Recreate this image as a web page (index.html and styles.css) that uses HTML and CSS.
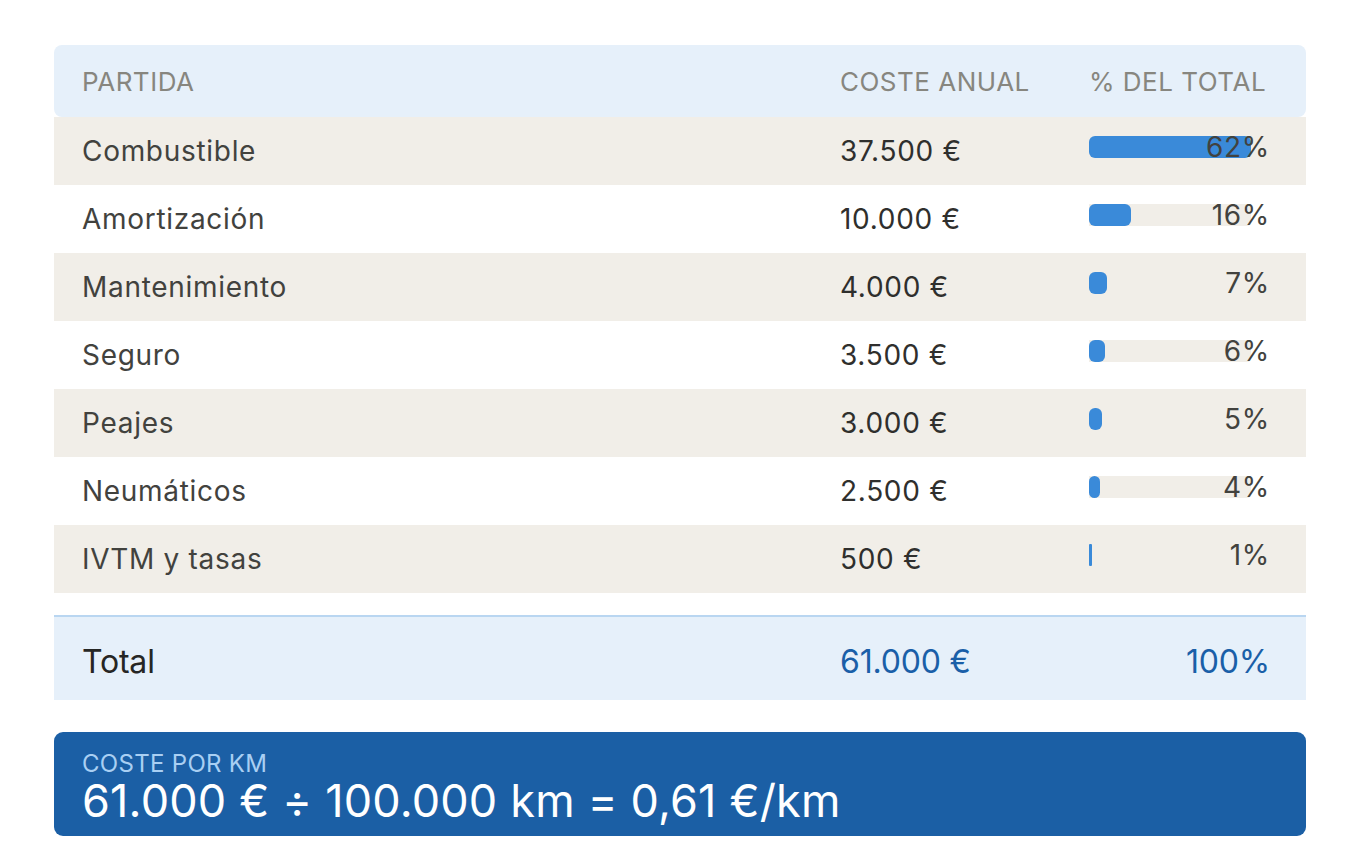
FILE: index.html
```html
<!DOCTYPE html>
<html lang="es">
<head>
<meta charset="utf-8">
<title>Costes anuales</title>
<link rel="stylesheet" href="styles.css">
</head>
<body>
<main class="page">
  <section class="table">
    <div class="row head">
      <div class="cell">PARTIDA</div>
      <div class="cell">COSTE ANUAL</div>
      <div class="cell">% DEL TOTAL</div>
    </div>
    <div class="row odd">
      <div class="cell">Combustible</div>
      <div class="cell num">37.500 €</div>
      <div class="cell"><div class="meter"><div class="track"><div class="fill" style="width:100%"></div></div><span class="pct">62%</span></div></div>
    </div>
    <div class="row">
      <div class="cell">Amortización</div>
      <div class="cell num">10.000 €</div>
      <div class="cell"><div class="meter"><div class="track"><div class="fill" style="width:25.8%"></div></div><span class="pct">16%</span></div></div>
    </div>
    <div class="row odd">
      <div class="cell">Mantenimiento</div>
      <div class="cell num">4.000 €</div>
      <div class="cell"><div class="meter"><div class="track"><div class="fill" style="width:11.3%"></div></div><span class="pct">7%</span></div></div>
    </div>
    <div class="row">
      <div class="cell">Seguro</div>
      <div class="cell num">3.500 €</div>
      <div class="cell"><div class="meter"><div class="track"><div class="fill" style="width:9.7%"></div></div><span class="pct">6%</span></div></div>
    </div>
    <div class="row odd">
      <div class="cell">Peajes</div>
      <div class="cell num">3.000 €</div>
      <div class="cell"><div class="meter"><div class="track"><div class="fill" style="width:8.1%"></div></div><span class="pct">5%</span></div></div>
    </div>
    <div class="row">
      <div class="cell">Neumáticos</div>
      <div class="cell num">2.500 €</div>
      <div class="cell"><div class="meter"><div class="track"><div class="fill" style="width:6.5%"></div></div><span class="pct">4%</span></div></div>
    </div>
    <div class="row odd">
      <div class="cell">IVTM y tasas</div>
      <div class="cell num">500 €</div>
      <div class="cell"><div class="meter"><div class="track"><div class="fill thin" style="width:1.6%"></div></div><span class="pct">1%</span></div></div>
    </div>
    <div class="row total">
      <div class="cell">Total</div>
      <div class="cell num blue">61.000 €</div>
      <div class="cell total-pct blue">100%</div>
    </div>
  </section>
  <section class="perkm">
    <div class="perkm-label">COSTE POR KM</div>
    <div class="perkm-value">61.000 € ÷ 100.000 km = 0,61 €/km</div>
  </section>
</main>
</body>
</html>
```
FILE: styles.css
```css
* { box-sizing: border-box; }
html, body { margin: 0; padding: 0; background: #ffffff; }
body {
  font-family: Inter, "Noto Sans", sans-serif;
  color: #42423e;
}
.page {
  width: 1252px;
  margin: 45px 0 0 54px;
}
.table { display: flex; flex-direction: column; }
.row {
  display: grid;
  grid-template-columns: 758px 249px 1fr;
  align-items: center;
  height: 68px;
  font-size: 28px;
  letter-spacing: 0.7px;
}
.row.odd { background: #f1eee8; }
.cell { padding-left: 28px; }
.cell:last-child { padding-right: 36px; }
.head {
  height: 72px;
  background: #e6f0fa;
  border-radius: 8px;
  color: #87867f;
  font-size: 26px;
  letter-spacing: 0.5px;
}
.head .cell:last-child { padding-right: 38px; }
.num { color: #2f2f2d; }
.meter {
  position: relative;
  height: 22px;
  margin-top: -8px;
}
.track {
  width: 162px;
  height: 22px;
  background: #f1eee8;
  border-radius: 0 4px 4px 0;
}
.fill {
  height: 22px;
  background: #3a8ad9;
  border-radius: 6px;
}
.fill.thin { border-radius: 1px; }
.pct {
  position: absolute;
  right: 0;
  top: 50%;
  transform: translateY(-50%);
  line-height: 1;
  color: #42423e;
}
.total {
  margin-top: 22px;
  height: 85px;
  padding-top: 6px;
  background: #e6f0fa;
  border-top: 2px solid #b9d6f1;
  color: #262624;
  font-size: 32px;
  letter-spacing: -0.2px;
}
.total .num { color: #1a5fa8; }
.blue { color: #1a5fa8; }
.total-pct { text-align: right; }
.perkm {
  margin-top: 32px;
  height: 104px;
  background: #1b5fa5;
  border-radius: 9px;
  padding: 20px 28px 0;
  color: #ffffff;
}
.perkm-label {
  font-size: 24px;
  line-height: 24px;
  color: #a9cff3;
  letter-spacing: 0.3px;
}
.perkm-value {
  margin-top: 2px;
  font-size: 45px;
  line-height: 46px;
  letter-spacing: 0.2px;
}
```
